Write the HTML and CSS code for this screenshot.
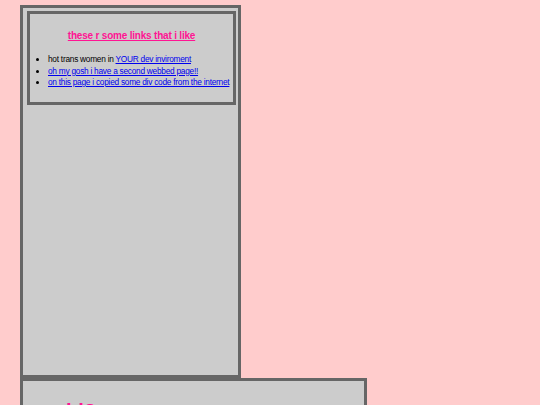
FILE: index.html
```html
<!DOCTYPE html>
<html>
<head>
<meta charset="utf-8">
<link rel="stylesheet" href="styles.css">
</head>
<body>
<div class="page">
  <div class="sidebar">
    <div class="links">
      <h2 class="links-title"><a href="#">these r some links that i like</a></h2>
      <ul class="link-list">
        <li>hot trans women in <a href="#">YOUR dev inviroment</a></li>
        <li><a href="#">oh my gosh i have a second webbed page!!</a></li>
        <li><a href="#">on this page i copied some div code from the internet</a></li>
      </ul>
    </div>
  </div>
  <div class="main">
    <h1 class="main-title">hi?</h1>
  </div>
</div>
</body>
</html>
```
FILE: styles.css
```css
html, body {
  margin: 0;
  padding: 0;
  background: #ffcccc;
  font-family: "Liberation Sans", Arial, sans-serif;
}
.page {
  padding: 5px 0 0 20px;
}
.sidebar {
  height: 364px;
  background: #cccccc;
  border: 3px solid #666666;
  padding: 3px 2px 0 4px;
  box-sizing: content-box;
  width: 209px;
}
.links {
  border: 3px solid #666666;
  background: #cccccc;
  height: 87px;
  box-sizing: content-box;
  width: 203px;
  padding-top: 1px;
}
.links-title {
  margin: 14px 0 0 0;
  text-align: center;
  font-size: 10px;
  letter-spacing: -0.2px;
  font-weight: bold;
  line-height: 14px;
}
.links-title a {
  color: #ff1493;
}
.link-list {
  margin: 11px 0 0 0;
  padding-left: 18px;
  font-size: 8.3px;
  letter-spacing: -0.25px;
  line-height: 11.5px;
  color: #000;
  white-space: nowrap;
}
.link-list a {
  color: #0000ee;
}
.main {
  width: 341px;
  height: 100px;
  background: #cccccc;
  border: 3px solid #666666;
}
.main-title {
  margin: 19px 0 0 43px;
  color: #ff1493;
  font-size: 20px;
}
```
